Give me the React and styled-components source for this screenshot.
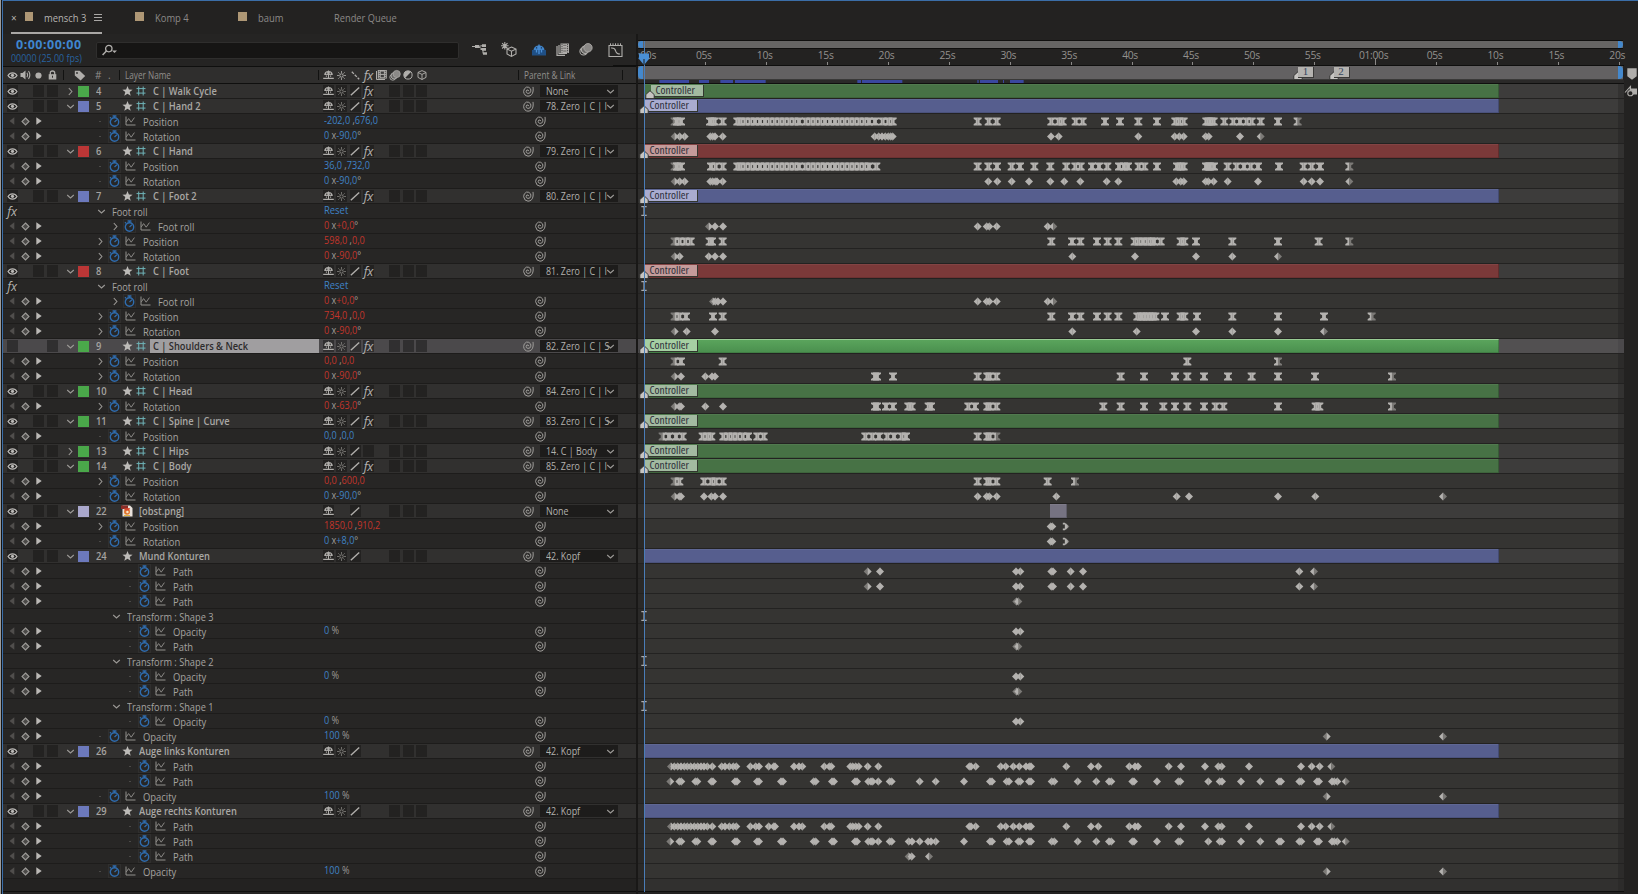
import React from "react";
import styled, { createGlobalStyle, css } from "styled-components";

const GlobalStyle = createGlobalStyle`
  * { box-sizing: border-box; }
  body { margin: 0; background: #232221; overflow: hidden; }
`;

const font = `"Open Sans", "Noto Sans", sans-serif`;

/* ---------- palette ---------- */
const LABELS = {
  green: { chip: "#4aa84a", bar: "#477245", tag: "#a3baa1" },
  blue: { chip: "#6c79bc", bar: "#565e8e", tag: "#a9acd0" },
  red: { chip: "#bb3636", bar: "#7b3939", tag: "#c49b9a" },
  lavender: { chip: "#aaa8cc", bar: "#767382", tag: "#aaa8cc" },
};

/* ---------- keyframe data, in thirds of a pixel along the time axis ---------- */
const ORIGIN = 21;
const LEAD = [322, 332, 346, 361, 375, 390, 405, 419, 434, 449, 463, 478, 493, 507, 527, 542, 556, 571, 585, 600, 615, 629, 644, 659, 673, 688, 703, 717];
const BLINK_A = [123, 133, 143, 153, 163, 172, 182, 193, 203, 213, 222, 232, 247, 275, 285, 298, 310, 319, 361, 377, 387, 416, 431, 435, 492, 507, 517, 583, 598, 604, 661, 668, 677, 686, 713, 745, 1018, 1023, 1037, 1112, 1127, 1150, 1168, 1188, 1198, 1203, 1309, 1383, 1405, 1498, 1515, 1524, 1616, 1653, 1725, 1765, 1775, 1857, 2013, 2045, 2069, 2104];
const BLINK_B1 = [121, 148, 154, 196, 202, 244, 249, 315, 321, 381, 387, 453, 459, 551, 557, 606, 612, 675, 681, 715, 723, 728, 745, 779, 785];
const BLINK_B2 = [1002, 1080, 1086, 1130, 1137, 1165, 1171, 1197, 1203, 1265, 1273, 1343, 1399, 1437, 1444, 1507, 1512, 1581, 1645, 1651, 1735, 1769, 1776, 1833, 1891, 1947, 1953, 2008, 2014, 2061, 2067, 2106, 2113, 2122, 2147];
const ROLL = [1043, 1070, 1078, 1100, 1253, 1270];
const MOUTH = [713, 750, 1158, 1171, 1264, 1269, 1322, 1359, 2008, 2052];
const FADE = [2090, 2439];

const d = (...at) => at.flat().map((x) => ({ x, kind: "d" }));
const h = (...at) => at.flat().map((x) => ({ x, kind: "h" }));

const layer = (num, name, color, o = {}) => ({ type: "layer", num, name, color, open: true, rig: true, fx: true, marker: 0, ...o });
const prop = (name, value, keys, o = {}) => ({ type: "prop", name, value, keys, depth: 0, ...o });
const group = (name, depth, o = {}) => ({ type: "group", name, depth, ...o });
const path = (keys) => prop("Path", "", keys, { depth: 2 });

const ROWS = [
  layer(4, "C | Walk Cycle", "green", { open: false, marker: 6, parent: "None" }),
  layer(5, "C | Hand 2", "blue", { parent: "78. Zero | C | I" }),
  prop("Position", "-202,0| ,|676,0", h(134, 141, 153, 240, 247, 254, 278, LEAD, 735, 758, 775, 788, 1043, 1076, 1100, 1264, 1286, 1298, 1337, 1358, 1425, 1470, 1525, 1581, 1636, 1648, 1661, 1729, 1736, 1744, 1751, 1783, 1810, 1830, 1850, 1865, 1892, 1944, 2003)),
  prop("Rotation", "0| x|-90,0|°", d(134, 149, 164, 241, 248, 255, 278, 734, 746, 756, 766, 775, 782, 788, 1263, 1286, 1525, 1634, 1648, 1661, 1727, 1736, 1830, 1892)),
  layer(6, "C | Hand", "red", { parent: "79. Zero | C | I" }),
  prop("Position", "36,0| ,|732,0", h(134, 141, 153, 243, 257, 278, LEAD, 739, 1043, 1075, 1101, 1145, 1170, 1213, 1261, 1309, 1336, 1352, 1386, 1407, 1432, 1467, 1482, 1494, 1526, 1543, 1581, 1641, 1652, 1661, 1728, 1736, 1740, 1752, 1793, 1820, 1842, 1862, 1884, 1947, 2021, 2045, 2070, 2158)),
  prop("Rotation", "0| x|-90,0|°", d(134, 149, 164, 241, 248, 256, 261, 278, 1075, 1102, 1145, 1197, 1261, 1303, 1351, 1430, 1465, 1639, 1652, 1661, 1727, 1735, 1751, 1793, 1884, 2021, 2045, 2070, 2158)),
  layer(7, "C | Foot 2", "blue", { parent: "80. Zero | C | I" }),
  group("Foot roll", 0, { effect: true, reset: true }),
  prop("Foot roll", "0| x|+0,0|°", d(237, 255, 279, ROLL), { depth: 1, twirl: true, expr: true }),
  prop("Position", "598,0| ,|0,0", h(134, 149, 166, 182, 239, 246, 278, 1264, 1326, 1351, 1401, 1433, 1465, 1514, 1526, 1539, 1552, 1564, 1572, 1592, 1652, 1663, 1698, 1807, 1944, 2066, 2158), { twirl: true, expr: true }),
  prop("Rotation", "0| x|-90,0|°", d(134, 149, 236, 255, 279, 1327, 1515, 1698, 1807, 1944), { twirl: true, expr: true }),
  layer(8, "C | Foot", "red", { parent: "81. Zero | C | I" }),
  group("Foot roll", 0, { effect: true, reset: true }),
  prop("Foot roll", "0| x|+0,0|°", d(249, 256, 264, 279, ROLL), { depth: 1, twirl: true, expr: true }),
  prop("Position", "734,0| ,|0,0", h(134, 148, 168, 249, 278, 1264, 1326, 1351, 1401, 1433, 1465, 1522, 1533, 1540, 1550, 1558, 1568, 1576, 1605, 1652, 1663, 1701, 1807, 1944, 2082, 2225), { twirl: true, expr: true }),
  prop("Rotation", "0| x|-90,0|°", d(134, 170, 255, 1327, 1520, 1698, 1807, 1944, 2082), { twirl: true, expr: true }),
  layer(9, "C | Shoulders & Neck", "green", { selected: true, parent: "82. Zero | C | S" }),
  prop("Position", "0,0| ,|0,0", h(134, 153, 278, 1672, 1944), { twirl: true, expr: true }),
  prop("Rotation", "0| x|-90,0|°", [...d(134, 153, 226, 246, 255), ...h(735, 741, 789, 1043, 1072, 1079, 1099, 1472, 1542, 1635, 1672, 1722, 1794, 1865, 1944, 2055, 2286)], { twirl: true, expr: true }),
  layer(10, "C | Head", "green", { parent: "84. Zero | C | I" }),
  prop("Rotation", "0| x|-63,0|°", [...d(134, 148, 153, 226, 279), ...h(735, 741, 768, 789, 835, 845, 896, 903, 1015, 1035, 1072, 1079, 1099, 1420, 1472, 1542, 1600, 1635, 1672, 1722, 1757, 1780, 1944, 2057, 2068, 2286)], { twirl: true, expr: true }),
  layer(11, "C | Spine | Curve", "green", { parent: "83. Zero | C | S" }),
  prop("Position", "0,0| ,|0,0", h(98, 117, 138, 158, 218, 232, 244, 280, 295, 308, 322, 338, 354, 382, 401, 706, 727, 747, 772, 792, 815, 828, 1043, 1072, 1079, 1099)),
  layer(13, "C | Hips", "green", { open: false, fx: false, parent: "14. C | Body" }),
  layer(14, "C | Body", "green", { parent: "85. Zero | C | I" }),
  prop("Position", "0,0| ,|600,0", h(134, 148, 223, 244, 257, 278, 1043, 1072, 1079, 1099, 1253, 1335), { twirl: true, expr: true }),
  prop("Rotation", "0| x|-90,0|°", d(134, 148, 153, 222, 244, 255, 279, 1043, 1070, 1078, 1100, 1279, 1640, 1677, 1944, 2056, 2439)),
  layer(22, "[obst.png]", "lavender", { rig: false, image: true, fx: false, marker: null, clip: [405.5, 17], parent: "None" }),
  prop("Position", "1850,0| ,|910,2", [...d(1262, 1267), { x: 1306, kind: "c" }], { twirl: true, expr: true, solid: true }),
  prop("Rotation", "0| x|+8,0|°", [...d(1262, 1267), { x: 1306, kind: "c" }], { solid: true }),
  layer(24, "Mund Konturen", "blue", { rig: false, fx: false, marker: null, parent: "42. Kopf" }),
  path(d(MOUTH)),
  path(d(MOUTH)),
  path(d(1159, 1165)),
  group("Transform : Shape 3", 1),
  prop("Opacity", "0| %", d(1158, 1171), { depth: 2, solid: true }),
  path(d(1159, 1165)),
  group("Transform : Shape 2", 1),
  prop("Opacity", "0| %", d(1158, 1171), { depth: 2, solid: true }),
  path(d(1159, 1165)),
  group("Transform : Shape 1", 1),
  prop("Opacity", "0| %", d(1158, 1171), { depth: 2, solid: true }),
  prop("Opacity", "100| %", d(FADE)),
  layer(26, "Auge links Konturen", "blue", { rig: false, fx: false, marker: null, parent: "42. Kopf" }),
  path(d(BLINK_A)),
  path(d(BLINK_B1, 869, 917, BLINK_B2)),
  prop("Opacity", "100| %", d(FADE)),
  layer(29, "Auge rechts Konturen", "blue", { rig: false, fx: false, marker: null, parent: "42. Kopf" }),
  path(d(BLINK_A)),
  path(d(BLINK_B1, 836, 846, 869, 894, 903, 917, BLINK_B2)),
  path(d(836, 845, 897)),
  prop("Opacity", "100| %", d(FADE)),
];

/* ---------- icons ---------- */
const Svg = styled.svg`
  display: block;
  flex: none;
  overflow: visible;
`;
const C = "#b0aeab";

const Eye = () => (
  <Svg width="11" height="9" viewBox="0 0 11 9">
    <path d="M1 4.5C3 1 8 1 10 4.5C8 8 3 8 1 4.5Z" fill="none" stroke="#bcbab7" strokeWidth="1.2" />
    <circle cx="5.5" cy="4.3" r="1.6" fill="#bcbab7" />
  </Svg>
);
const Speaker = () => (
  <Svg width="11" height="10" viewBox="0 0 11 10">
    <path d="M0.5 3H2.5L5.5 0.5V9.5L2.5 7H0.5Z" fill={C} />
    <path d="M7 2.8Q8.3 5 7 7.2M8.5 1Q11.2 5 8.5 9" fill="none" stroke={C} strokeWidth="1.1" />
  </Svg>
);
const Dot = () => (
  <Svg width="7" height="7" viewBox="0 0 7 7"><circle cx="3.5" cy="3.5" r="3.1" fill={C} /></Svg>
);
const Lock = () => (
  <Svg width="9" height="10" viewBox="0 0 9 10">
    <path d="M2.3 5V3Q2.3 1 4.5 1Q6.7 1 6.7 3V5" fill="none" stroke={C} strokeWidth="1.3" />
    <rect x="0.7" y="4.2" width="7.6" height="5.3" fill={C} />
    <rect x="4" y="5.7" width="1" height="2" fill="#2e2d2c" />
  </Svg>
);
const Tag = () => (
  <Svg width="12" height="11" viewBox="0 0 12 11">
    <path d="M0.8 0.8H5.6L11.2 6L6.6 10.6L0.8 5.4Z" fill={C} />
    <circle cx="3" cy="3" r="0.9" fill="#2e2d2c" />
  </Svg>
);
const Twirl = ({ open }) => (
  <Svg width="9" height="9" viewBox="0 0 9 9">
    <path d={open ? "M1.2 3L4.5 6L7.8 3" : "M2.8 1L5.9 4.5L2.8 8"} fill="none" stroke="#9b9996" strokeWidth="1.1" />
  </Svg>
);
const Star = () => (
  <Svg width="11" height="10" viewBox="0 0 11 10">
    <path d="M5.5 0L6.9 3.5L10.6 3.7L7.7 6.1L8.7 9.8L5.5 7.7L2.3 9.8L3.3 6.1L0.4 3.7L4.1 3.5Z" fill="#bdbbb8" />
  </Svg>
);
const Rig = () => (
  <Svg width="10" height="10" viewBox="0 0 10 10">
    <path d="M2.7 0.5V9.5M7.2 0.5V9.5M0.5 2.6H9.5M0.5 7.1H9.5" stroke="#6fb3b8" strokeWidth="1" />
  </Svg>
);
const ImageFile = () => (
  <Svg width="12" height="12" viewBox="0 0 12 12">
    <path d="M1.5 0.5H9L11.5 3V11.5H1.5Z" fill="#e9e2dc" />
    <path d="M0 0.5H7V4H0Z" fill="#8c2d28" />
    <circle cx="6" cy="6.7" r="3" fill="#e0762e" />
    <path d="M3 3.5L9 3L8 5.5L4 5.5Z" fill="#d9482e" />
    <circle cx="6.4" cy="7" r="1.2" fill="#f6e6c8" />
    <path d="M3 10.5H9" stroke="#e3b23c" strokeWidth="1" />
  </Svg>
);
const Shy = ({ color = C, base = color }) => (
  <Svg width="11" height="10" viewBox="0 0 11 10">
    <path d="M1.2 5Q1.4 1 5.5 1Q9.6 1 9.8 5Z" fill={color} />
    <path d="M5.5 0.6V8M0.2 8.4H10.8M3.4 5.4V6.8M7.6 5.4V6.8" stroke={base} strokeWidth="1.1" />
    <path d="M3.8 2.6V4.2M7.2 2.6V4.2" stroke="#252423" strokeWidth="1" />
  </Svg>
);
const Sun = ({ color = "#83817e" }) => (
  <Svg width="9" height="9" viewBox="0 0 9 9">
    <circle cx="4.5" cy="4.5" r="1.7" fill="none" stroke={color} strokeWidth="1" />
    <path d="M4.5 0V2M4.5 7V9M0 4.5H2M7 4.5H9M1.3 1.3L2.6 2.6M6.4 6.4L7.7 7.7M7.7 1.3L6.4 2.6M2.6 6.4L1.3 7.7" stroke={color} strokeWidth="0.8" />
  </Svg>
);
const Slash = () => (
  <Svg width="10" height="9" viewBox="0 0 10 9"><path d="M0.8 8.3L9.2 0.6" stroke={C} strokeWidth="1.4" /></Svg>
);
const Backslash = () => (
  <Svg width="9" height="9" viewBox="0 0 9 9"><path d="M0.8 0.7L8.2 8.3" stroke={C} strokeWidth="1.3" strokeDasharray="3 1.2" /></Svg>
);
const Film = () => (
  <Svg width="11" height="10" viewBox="0 0 11 10">
    <path d="M0.5 1V9.5H9" fill="none" stroke={C} strokeWidth="1" />
    <rect x="1.8" y="0" width="9" height="8.6" fill={C} />
    <path d="M3.3 0.8V8M9.3 0.8V8" stroke="#2e2d2c" strokeWidth="0.9" strokeDasharray="1 1" />
    <rect x="4.7" y="1.5" width="3.2" height="2.4" fill="#3e3d3c" /><rect x="4.7" y="4.9" width="3.2" height="2.4" fill="#3e3d3c" />
  </Svg>
);
const MotionBlur = ({ w = 12, h: height = 11 }) => (
  <Svg width={w} height={height} viewBox="0 0 12 11">
    <circle cx="3.8" cy="7.2" r="3" fill="none" stroke={C} strokeWidth="0.9" />
    <circle cx="5.2" cy="5.8" r="3.2" fill="#6a6967" stroke={C} strokeWidth="0.9" />
    <circle cx="7.7" cy="4" r="3.6" fill="#8b8987" stroke={C} strokeWidth="0.7" />
  </Svg>
);
const Adjust = () => (
  <Svg width="10" height="10" viewBox="0 0 10 10">
    <circle cx="5" cy="5" r="4.1" fill="none" stroke={C} strokeWidth="1" />
    <path d="M7.9 2.1A4.1 4.1 0 0 0 2.1 7.9Z" fill={C} />
  </Svg>
);
const Cube = ({ size = 10 }) => (
  <Svg width={size} height={size} viewBox="0 0 10 10">
    <path d="M5 0.6L9 2.4V7.4L5 9.5L1 7.4V2.4ZM1 2.5L5 4.4L9 2.5M5 4.4V9.3" fill="none" stroke={C} strokeWidth="0.95" />
  </Svg>
);
const Stopwatch = () => (
  <Svg width="11" height="12" viewBox="0 0 11 12">
    <circle cx="5.5" cy="7" r="4.2" fill="none" stroke="#2f6cae" strokeWidth="1.4" />
    <path d="M3.6 1H7.4M5.5 1V3M0.9 3.2L2 2.2M5.5 7L8 4.6" stroke="#2f6cae" strokeWidth="1.3" />
  </Svg>
);
const Graph = () => (
  <Svg width="11" height="10" viewBox="0 0 11 10">
    <path d="M1 0.5V9H10.5" fill="none" stroke="#93918e" strokeWidth="1" />
    <path d="M1.2 6L3.6 2.6L6.2 6.2L9.4 1.6" fill="none" stroke="#8b8986" strokeWidth="1" strokeLinejoin="round" />
  </Svg>
);
const Spiral = () => (
  <Svg width="11" height="11" viewBox="0 0 11 11">
    <path d="M5.9 5.2Q5.2 3.4 3.8 4.1Q2.7 5.2 3.4 6.6Q4.8 8.1 6.8 7Q8.6 5.4 7.6 2.9Q6 0.6 3.5 1.1Q0.6 2.4 0.6 5.6Q1.2 9.9 5 10.2Q9.4 10 10.1 5Q10.3 3 10 0.9" fill="none" stroke="#9f9d9a" strokeWidth="1" />
  </Svg>
);
const NavArrow = ({ dir }) => (
  <Svg width="6" height="8" viewBox="0 0 6 8">
    <path d={dir === "left" ? "M5.3 0.3V7.7L0.5 4Z" : "M0.3 0.2V7.8L5.7 4Z"} fill={dir === "left" ? "#504e4c" : "#bbb9b6"} />
  </Svg>
);
const NavKey = () => (
  <Svg width="9" height="9" viewBox="0 0 9 9"><path d="M4.5 1L8 4.5L4.5 8L1 4.5Z" fill="#4a4947" stroke="#9d9b98" strokeWidth="1.1" /></Svg>
);
const IBeam = () => (
  <Svg width="6" height="10" viewBox="0 0 6 10">
    <path d="M0.3 0.6H5.7M0.3 9.4H5.7M3 0.6V9.4" stroke="#a7a9ac" strokeWidth="1.2" />
  </Svg>
);
const Pin = () => (
  <Svg width="10" height="9" viewBox="0 0 10 9">
    <path d="M5 0.7L9.2 4.6V8.6H0.8V4.6Z" fill="#c6c4c1" stroke="#2d2c2b" strokeWidth="0.9" />
  </Svg>
);

/* ---------- shell ---------- */
const Panel = styled.div`
  width: 1638px;
  height: 894px;
  display: flex;
  flex-direction: column;
  background: #232221;
  border-top: 1px solid #4581c2;
  border-left: 3px solid #34649a;
  border-image: linear-gradient(90deg, #9a9a9a 0 1px, #141414 1px 2px, #3b6ea8 2px) 1 0 0 3;
  font-family: ${font};
  font-size: 10.5px;
  line-height: 14px;
  color: #a5a3a0;
  white-space: nowrap;
`;
/* Narrowed text: the interface face is slightly condensed. */
const Text = styled.span`
  display: inline-block;
  transform: scaleX(${(p) => p.$k || 0.89});
  transform-origin: left center;
`;
const TabBar = styled.div`
  height: 33px;
  display: flex;
  align-items: stretch;
  padding-left: 8px;
`;
const Tab = styled.div`
  display: flex;
  align-items: center;
  width: ${(p) => p.$w}px;
  margin-right: ${(p) => p.$gap || 0}px;
  padding-top: 2px;
  font-size: 11.2px;
  color: ${(p) => (p.$active ? "#b5b3b0" : "#8b8987")};
  border-bottom: 2px solid ${(p) => (p.$active ? "#a9a7a5" : "transparent")};
`;
const TabTitle = styled.span`
  width: 50px;
`;
const Close = styled.span`
  width: 14px;
  font-size: 10px;
`;
const Swatch = styled.span`
  width: 9px;
  height: 9px;
  margin-right: 11px;
  margin-bottom: 2px;
  background: #ae9775;
`;
const Burger = styled.span`
  width: 8px;
  height: 7px;
  margin-left: auto;
  border-top: 1px solid #a9a7a5;
  border-bottom: 1px solid #a9a7a5;
  background: linear-gradient(#a9a7a5, #a9a7a5) 0 2px / 100% 1px no-repeat;
`;
const Main = styled.div`
  flex: 1;
  display: grid;
  grid-template-columns: 635px 986px 1fr;
  min-height: 0;
`;

/* ---------- left column ---------- */
const Outline = styled.div`
  display: flex;
  flex-direction: column;
  border-right: 2px solid #191817;
  background: #252423;
`;
const Toolbar = styled.div`
  height: 32px;
  display: flex;
  align-items: flex-start;
  padding-left: 8px;
`;
const Clock = styled.div`
  width: 85px;
  padding-top: 4px;
`;
const Time = styled.div`
  padding-left: 5px;
  font-family: "Noto Sans", ${font};
  font-size: 12.5px;
  font-weight: 700;
  letter-spacing: 0.5px;
  line-height: 14px;
  color: #3f86cf;
`;
const Frames = styled.div`
  font-size: 10.5px;
  line-height: 12px;
  color: #28629f;
`;
const Search = styled.div`
  width: 363px;
  height: 17px;
  margin-top: 7.5px;
  padding: 1px 0 0 5px;
  border: 1px solid #2f2e2d;
  border-radius: 2px;
  background: #161514;
`;
const Tools = styled.div`
  display: grid;
  grid-template-columns: 31px 28px 32px 15px 31px 29px;
  justify-items: center;
  align-items: center;
  height: 17px;
  margin-top: 7px;
  margin-left: 5px;
`;
const HeaderRow = styled.div`
  height: 18px;
  display: flex;
  align-items: center;
  border-top: 1px solid #0f0f0e;
  border-bottom: 1px solid #0f0f0e;
  background: #2f2e2d;
  color: #918f8c;
  font-size: 10px;
`;
const rowBase = css`
  height: 15px;
  flex: none;
  display: flex;
  align-items: center;
`;
const Row = styled.div`
  ${rowBase}
  border-bottom: 1px solid #1d1c1b;
  background: ${(p) => (p.$selected ? "#4b494b" : p.$layer ? "#31302f" : "#272625")};
  font-weight: ${(p) => (p.$layer ? 600 : 400)};
  font-size: ${(p) => (p.$layer ? 11 : 10.6)}px;
`;
const AvCells = styled.div`
  width: 60px;
  flex: none;
  display: grid;
  grid-template-columns: repeat(4, 11px);
  column-gap: 2.4px;
  padding-left: 3.5px;
  align-items: center;
  justify-items: center;
`;
const Cell = styled.span`
  width: 11px;
  height: 12px;
  display: flex;
  align-items: center;
  justify-content: center;
  background: ${(p) => (p.$bare ? "transparent" : p.$selected ? "#302f30" : "#232221")};
`;
const HeadCell = styled(Cell)`
  background: transparent;
`;
const TwirlBox = styled.span`
  width: 15px;
  display: flex;
  justify-content: center;
`;
const Chip = styled.span`
  width: 11px;
  height: 11px;
  background: ${(p) => p.$color};
`;
const Num = styled.span`
  width: 32px;
  padding-left: 7px;
  line-height: 12px;
  padding-bottom: 1px;
`;
const IconBox = styled.span`
  width: ${(p) => p.$w || 15}px;
  flex: none;
  display: flex;
  justify-content: center;
`;
const Name = styled.span`
  width: ${(p) => (p.$wide ? 185.5 : 169)}px;
  height: 14px;
  margin-left: ${(p) => (p.$wide ? 0 : 1.5)}px;
  padding-left: ${(p) => (p.$wide ? 6 : 3.5)}px;
  color: ${(p) => (p.$selected ? "#2c2b2b" : "#aaa8a5")};
  background: ${(p) => (p.$selected ? "#a09ea0" : "transparent")};
`;
const Switches = styled.div`
  width: 194px;
  flex: none;
  display: grid;
  grid-template-columns: repeat(8, 11px);
  column-gap: 2.3px;
  padding-left: 4.5px;
  align-items: center;
  justify-items: center;
`;
const Fx = styled.i`
  font-family: "Open Sans", sans-serif;
  font-size: 12.5px;
  font-weight: 400;
  line-height: 11px;
  letter-spacing: -0.3px;
  color: #b5b3b0;
`;
const Link = styled.span`
  width: 11px;
  margin: 0 6px 0 10.5px;
`;
const Select = styled.div`
  width: 78px;
  height: 12px;
  display: flex;
  align-items: center;
  padding-left: 6px;
  background: #1d1c1b;
  font-weight: 400;
  font-size: 10.6px;
  color: #b3b1ae;
`;
const SelectText = styled.span`
  width: 60px;
  line-height: 14px;
`;
const Indent = styled.span`
  width: ${(p) => p.$w}px;
  flex: none;
`;
const StopBox = styled.span`
  width: 13px;
  height: 14px;
  flex: none;
  display: flex;
  align-items: center;
  justify-content: center;
  border: 1px solid #302f2e;
`;
const PropName = styled.span`
  flex: none;
  width: ${(p) => p.$w}px;
  padding-top: 1px;
`;
const Value = styled.span`
  width: 211px;
  flex: none;
  line-height: 12px;
  padding-bottom: 2px;
  color: ${(p) => (p.$expr ? "#c2352b" : "#3f82c6")};
`;
const Unit = styled.span`
  color: #9b9996;
`;
const Dash = styled.span`
  width: 2px;
  height: 1px;
  background: #4a4947;
`;
const Divider = styled.span`
  width: 1px;
  height: 10px;
  background: #121211;
`;
const HeadText = styled.span`
  width: ${(p) => p.$w}px;
  padding-left: ${(p) => p.$pad || 0}px;
`;

function Header() {
  return (
    <HeaderRow>
      <AvCells>
        <HeadCell><Eye /></HeadCell><HeadCell><Speaker /></HeadCell><HeadCell><Dot /></HeadCell><HeadCell><Lock /></HeadCell>
      </AvCells>
      <Divider />
      <IconBox $w={31}><Tag /></IconBox>
      <HeadText $w={13}>#</HeadText>
      <HeadText $w={11}>.</HeadText>
      <Divider />
      <HeadText $w={197.5} $pad={5}><Text $k={0.82}>Layer Name</Text></HeadText>
      <Divider />
      <Switches>
        <Shy /><Sun color={C} /><Backslash /><Fx>fx</Fx><Film /><MotionBlur /><Adjust /><Cube />
      </Switches>
      <Indent $w={5.5} />
      <Divider />
      <HeadText $w={103} $pad={5}><Text $k={0.82}>Parent &amp; Link</Text></HeadText>
      <Divider />
    </HeaderRow>
  );
}

function LayerRow({ row }) {
  const s = row.selected;
  return (
    <Row $layer $selected={s}>
      <AvCells>
        <Cell $selected={s}>{!s && <Eye />}</Cell>
        <Cell $bare />
        <Cell $bare={s} />
        <Cell $selected={s} />
      </AvCells>
      <TwirlBox><Twirl open={row.open} /></TwirlBox>
      <Chip $color={LABELS[row.color].chip} />
      <Num><Text $k={0.85}>{row.num}</Text></Num>
      <IconBox $w={12}>{row.image ? <ImageFile /> : <Star />}</IconBox>
      {row.rig && <IconBox><Rig /></IconBox>}
      <Name $selected={s} $wide={!row.rig}><Text $k={0.845}>{row.name}</Text></Name>
      <Switches>
        <Cell $selected={s}><Shy /></Cell>
        <Cell $bare={row.image} $selected={s}>{!row.image && <Sun />}</Cell>
        <Cell $selected={s}><Slash /></Cell>
        <Cell $bare={!row.rig} $selected={s}>{row.fx && <Fx>fx</Fx>}</Cell>
        <Cell $bare />
        <Cell $selected={s} /><Cell $selected={s} /><Cell $selected={s} />
      </Switches>
      <Link><Spiral /></Link>
      <Select><SelectText><Text $k={0.84}>{row.parent}</Text></SelectText><Twirl open /></Select>
    </Row>
  );
}

function PropRow({ row }) {
  const shift = row.depth * 15;
  return (
    <Row>
      <AvCells><NavArrow dir="left" /><NavKey /><NavArrow dir="right" /></AvCells>
      <Indent $w={29.5 + shift} />
      <TwirlBox>{row.twirl ? <Twirl /> : <Dash />}</TwirlBox>
      <StopBox><Stopwatch /></StopBox>
      <IconBox $w={19}><Graph /></IconBox>
      <Indent $w={3.5} />
      <PropName $w={181 - shift}><Text>{row.name}</Text></PropName>
      <Value $expr={row.expr}>
        <Text $k={0.86}>
          {row.value.split("|").map((part, i) => (i % 2 ? <Unit key={i}>{part}</Unit> : part))}
        </Text>
      </Value>
      <Spiral />
    </Row>
  );
}

function GroupRow({ row }) {
  const shift = row.depth * 15;
  return (
    <Row>
      <AvCells>{row.effect && <Cell><Fx>fx</Fx></Cell>}</AvCells>
      <Indent $w={31 + shift} />
      <TwirlBox><Twirl open /></TwirlBox>
      <Indent $w={3} />
      <PropName $w={212 - shift}><Text $k={0.87}>{row.name}</Text></PropName>
      <Value>{row.reset && <Text>Reset</Text>}</Value>
    </Row>
  );
}

/* ---------- timeline ---------- */
const Timeline = styled.div`
  position: relative;
  display: flex;
  flex-direction: column;
  background: #232221;
`;
const Navigator = styled.div`
  height: 9px;
  margin-top: 6px;
  display: flex;
  justify-content: space-between;
  margin-right: 1px;
  border-top: 1px solid #0f0f0e;
  border-bottom: 1px solid #0f0f0e;
  background: #666564;
`;
const Handle = styled.span`
  width: 5px;
  background: #4488cc;
  border-radius: ${(p) => (p.$end ? "0 4px 4px 0" : "4px 0 0 4px")};
`;
const Ruler = styled.div`
  height: 17px;
  display: flex;
  margin-left: -25.5px;
  border-bottom: 1px solid #0f0f0e;
`;
const Tick = styled.span`
  width: 60.9px;
  flex: none;
  display: flex;
  flex-direction: column;
  align-items: center;
  padding-left: ${(p) => (p.$first ? 8 : 0)}px;
  font-size: 10.3px;
  line-height: 12px;
  letter-spacing: -0.3px;
  color: #93918e;
  &::after {
    content: "";
    width: 1px;
    height: ${(p) => (p.$major ? 7 : 4)}px;
    margin-top: ${(p) => (p.$major ? -2 : 1)}px;
    margin-left: 4px;
    background: ${(p) => (p.$first ? "transparent" : "#8b8987")};
  }
`;
const WorkArea = styled.div`
  height: 14px;
  display: flex;
  justify-content: space-between;
  margin-right: 1px;
  background: #636162;
  border-bottom: 1px solid #3a3938;
`;
const CacheStrip = styled.div`
  height: 4px;
  border-bottom: 1px solid #0f0f0e;
  background: #2a2928;
`;
const Track = styled.div`
  ${rowBase}
  position: relative;
  align-items: stretch;
  padding: 0 6px;
  border-bottom: 1px solid #232221;
  background: ${(p) =>
    p.$selected
      ? "linear-gradient(90deg, #4b494b 6px, #525051 6px 980px, #4b494b 980px)"
      : p.$layer
      ? "linear-gradient(90deg, #302f2e 6px, #3d3c3b 6px 980px, #333231 980px)"
      : "linear-gradient(90deg, #2a2928 6px, #353432 6px 980px, #2c2b2a 980px)"};
`;
const Bar = styled.div`
  width: ${(p) => p.$w}px;
  margin-left: ${(p) => p.$x}px;
  border-right: 1px solid rgba(0, 0, 0, 0.2);
  box-shadow: inset 0 1px rgba(255, 255, 255, 0.06), inset 0 -1px rgba(0, 0, 0, 0.12);
  background: ${(p) => (p.$selected ? "linear-gradient(#93c98f 0 1px, #5aa45c 1px, #4a8f4e)" : p.$color)};
`;
const MarkerTag = styled.div`
  width: 53px;
  height: 12px;
  margin-top: 1px;
  margin-left: ${(p) => p.$x}px;
  padding-left: 5px;
  border-right: 1px solid #33372f;
  border-bottom: 1px solid #33372f;
  background: ${(p) => p.$color};
  color: #2b2d38;
  font-size: 11.3px;
  font-stretch: 75%;
  letter-spacing: 0.05px;
  line-height: 10px;
`;
const PinSpot = styled.span`
  position: absolute;
  left: ${(p) => p.$x}px;
  top: 6px;
`;
const IBeamSpot = styled.span`
  position: absolute;
  left: 3px;
  top: 2px;
`;
const KeyLane = styled.svg`
  position: absolute;
  left: 0;
  top: 0;
  width: 986px;
  height: 14px;
`;
const Playhead = styled.div`
  position: absolute;
  left: 5.5px;
  top: 7px;
  width: 1px;
  bottom: 2px;
  background: #4a7db8;
`;
const PlayheadCap = styled.svg`
  position: absolute;
  left: 0;
  top: 19px;
`;
const CompMarker = styled.div`
  position: absolute;
  top: 33px;
  left: ${(p) => p.$x}px;
  display: flex;
  align-items: flex-end;
`;
const CompTag = styled.span`
  width: 16px;
  height: 11px;
  margin-left: -5px;
  margin-bottom: 2px;
  border-right: 1px solid #3a3938;
  border-bottom: 1px solid #3a3938;
  background: #b4b2af;
  color: #34455e;
  font-family: "Liberation Serif", serif;
  font-size: 11px;
  line-height: 9px;
  text-align: center;
`;
const Filler = styled.div`
  flex: 1;
  margin-bottom: 2px;
  background: ${(p) => (p.$track ? "linear-gradient(90deg, #2a2928 6px, #31302f 6px 980px, #2c2b2a 980px)" : "#232221")};
  border-bottom: 1px solid #0f0f0e;
`;
const Gutter = styled.div`
  display: flex;
  flex-direction: column;
  align-items: flex-end;
  padding-top: 34px;
  padding-right: 1px;
  gap: 6px;
`;

const D_L = "M0.1 -3.9H0L-4 0L0 3.9H0.1Z";
const D_R = "M-0.1 -3.9H0L4 0L0 3.9H-0.1Z";
const H_L = "M0.1 -4H-4V-2.5L-1.9 -1.2V1.2L-4 2.5V4H0.1Z";
const H_R = "M-0.1 -4H4V-2.5L1.9 -1.2V1.2L4 2.5V4H-0.1Z";

function Keys({ keys, solid }) {
  const bright = "#b4b2af";
  const dim = "#7b7976";
  const edge = solid ? bright : dim;
  return (
    <KeyLane viewBox="0 0 986 14">
      {keys.map((k, i) => {
        const x = (k.x - ORIGIN - 3) / 3;
        if (k.kind === "c") {
          return (
            <g key={i} transform={`translate(${x} 7.5)`}>
              <path d="M0.5 -3.5L4 0L0.5 3.5Z" fill={dim} />
              <path d="M-2.5 -3.8H-0.5L2.4 -1V1L-0.5 3.8H-2.5V1.9H-0.5V-1.9H-2.5Z" fill={bright} />
            </g>
          );
        }
        const hold = k.kind === "h";
        return (
          <g key={i} transform={`translate(${x} 7.5)`}>
            <path d={hold ? H_L : D_L} fill={i === 0 ? edge : bright} />
            <path d={hold ? H_R : D_R} fill={i === keys.length - 1 ? edge : bright} />
          </g>
        );
      })}
    </KeyLane>
  );
}

function TrackRow({ row }) {
  if (row.type === "layer") {
    const color = LABELS[row.color];
    const [x, w] = row.clip || [0, 854];
    return (
      <Track $layer $selected={row.selected}>
        <Bar $x={x + 0.5} $w={w} $color={color.bar} $selected={row.selected}>
          {row.marker !== null && (
            <MarkerTag $x={row.marker} $color={row.selected ? "#a6cfa3" : color.tag}>Controller</MarkerTag>
          )}
        </Bar>
        {row.marker !== null && <PinSpot $x={row.marker + 1}><Pin /></PinSpot>}
      </Track>
    );
  }
  return (
    <Track>
      {row.keys && <Keys keys={row.keys} solid={row.solid} />}
      {row.type === "group" && <IBeamSpot><IBeam /></IBeamSpot>}
    </Track>
  );
}

const TICKS = [":00s", "05s", "10s", "15s", "20s", "25s", "30s", "35s", "40s", "45s", "50s", "55s", "01:00s", "05s", "10s", "15s", "20s"];
const CACHED = [[88, 177], [207, 237], [271, 309], [315, 407], [682, 693], [696, 817], [1042, 1046], [1050, 1104], [1119, 1122], [1140, 1181]];

export default function App() {
  return (
    <>
      <GlobalStyle />
      <Panel>
        <TabBar>
          <Tab $active $w={91} $gap={33}><Close>×</Close><Swatch /><TabTitle><Text $k={0.84}>mensch 3</Text></TabTitle><Burger /></Tab>
          <Tab $w={103}><Swatch /><Text $k={0.84}>Komp 4</Text></Tab>
          <Tab $w={96}><Swatch /><Text $k={0.84}>baum</Text></Tab>
          <Tab $w={70}><Text $k={0.83}>Render Queue</Text></Tab>
        </TabBar>
        <Main>
          <Outline>
            <Toolbar>
              <Clock><Time>0:00:00:00</Time><Frames><Text $k={0.85}>00000 (25.00 fps)</Text></Frames></Clock>
              <Search>
                <Svg width="16" height="12" viewBox="0 0 16 12">
                  <circle cx="6.8" cy="4.6" r="3.2" fill="none" stroke={C} strokeWidth="1.3" />
                  <path d="M4.4 7L0.6 11" stroke={C} strokeWidth="1.5" />
                  <path d="M10 6.5H15L12.5 9Z" fill={C} />
                </Svg>
              </Search>
              <Tools>
                <Svg width="15" height="11" viewBox="0 0 15 11">
                  <path d="M0 2.5H6M8.5 5.5H11M6 2.5L11 1.5M6 2.5L11 5.5V9.5H12" fill="none" stroke={C} strokeWidth="1" />
                  <path d="M3 1H7V4H3ZM10 0.3H14V3H10ZM10 4H14V6.8H10ZM11 8.2H15V10.8H11Z" fill={C} />
                </Svg>
                <Svg width="16" height="15" viewBox="0 0 16 15">
                  <path d="M3.8 0V7.6M0 3.8H7.6M1.1 1.1L6.5 6.5M6.5 1.1L1.1 6.5" stroke={C} strokeWidth="1.1" />
                  <path d="M10.5 5L15 7V12L10.5 14.4L6 12V7ZM6 7L10.5 9.2L15 7M10.5 9.2V14.4" fill="#252423" stroke={C} strokeWidth="1.1" />
                </Svg>
                <Svg width="14" height="12" viewBox="0 0 14 12">
                  <path d="M0 6H14V11.5H0Z" fill="#1f4f85" />
                  <path d="M1.5 6Q2 1.5 7 1.5Q12 1.5 12.5 6Z" fill="#3f83c8" />
                  <path d="M4.6 3V4.6M9.4 3V4.6" stroke="#1f3c60" strokeWidth="1" />
                  <path d="M7 0.5V10M4.5 6V8.5M9.5 6V8.5" stroke="#4a8fd6" strokeWidth="1.3" />
                </Svg>
                <Svg width="14" height="13" viewBox="0 0 14 13">
                  <path d="M1 3V12.4H9M3 2V10.5H11" fill="none" stroke={C} strokeWidth="1.2" />
                  <rect x="4.5" y="0.5" width="8.5" height="9.5" fill={C} />
                  <path d="M6 1.2V9.6M11.6 1.2V9.6" stroke="#2e2d2c" strokeDasharray="1 1" />
                  <path d="M7.2 2.3H10.4M7.2 5.2H10.4M7.2 8H10.4" stroke="#555351" strokeWidth="0.8" />
                </Svg>
                <MotionBlur w={14} h={13} />
                <Svg width="15" height="14" viewBox="0 0 15 14">
                  <path d="M1 2.5H14V13.5H1Z" fill="none" stroke={C} strokeWidth="1.1" />
                  <path d="M2.5 0.3V2M5 0.3V2M7.5 0.3V2M10 0.3V2M12.5 0.3V2" stroke={C} />
                  <path d="M3 5Q6.8 4.6 7.6 7.8Q8.4 11 12 11" fill="none" stroke={C} strokeWidth="1.1" />
                </Svg>
              </Tools>
            </Toolbar>
            <Header />
            {ROWS.map((row, i) =>
              row.type === "layer" ? <LayerRow key={i} row={row} /> : row.type === "prop" ? <PropRow key={i} row={row} /> : <GroupRow key={i} row={row} />
            )}
            <Filler />
          </Outline>
          <Timeline>
            <Navigator><Handle /><Handle $end /></Navigator>
            <Ruler>{TICKS.map((t, i) => <Tick key={i} $first={i === 0} $major={i === 12}>{t}</Tick>)}</Ruler>
            <WorkArea><Handle /><Handle $end /></WorkArea>
            <CacheStrip>
              <Svg width="986" height="3" viewBox="0 0 986 3">
                {CACHED.map(([a, b]) => <rect key={a} x={(a - 24) / 3} y="0" width={(b - a) / 3} height="3" fill="#3a479f" />)}
              </Svg>
            </CacheStrip>
            {ROWS.map((row, i) => <TrackRow key={i} row={row} />)}
            <Filler $track />
            <CompMarker $x={655}><Pin /><CompTag>1</CompTag></CompMarker>
            <CompMarker $x={690.5}><Pin /><CompTag>2</CompTag></CompMarker>
            <Playhead />
            <PlayheadCap width="12" height="13" viewBox="0 0 12 13">
              <path d="M1 0.5H11V6L6 12L1 6Z" fill="#4a8fd6" />
              <path d="M6 6V12" stroke="#1d1c1b" strokeWidth="1" />
            </PlayheadCap>
          </Timeline>
          <Gutter>
            <Svg width="10" height="12" viewBox="0 0 10 12"><path d="M0.3 0.3H9.7V8.2L5 11.8L0.3 8.2Z" fill={C} /></Svg>
            <Svg width="12" height="11" viewBox="0 0 12 11">
              <path d="M0 6.5L5.5 0.5V3" fill="none" stroke={C} strokeWidth="1.1" />
              <path d="M4 2.5H12V8.5H8Z" fill={C} />
              <circle cx="5.4" cy="7.2" r="2.6" fill="#252423" stroke={C} strokeWidth="1.1" />
            </Svg>
          </Gutter>
        </Main>
      </Panel>
    </>
  );
}
